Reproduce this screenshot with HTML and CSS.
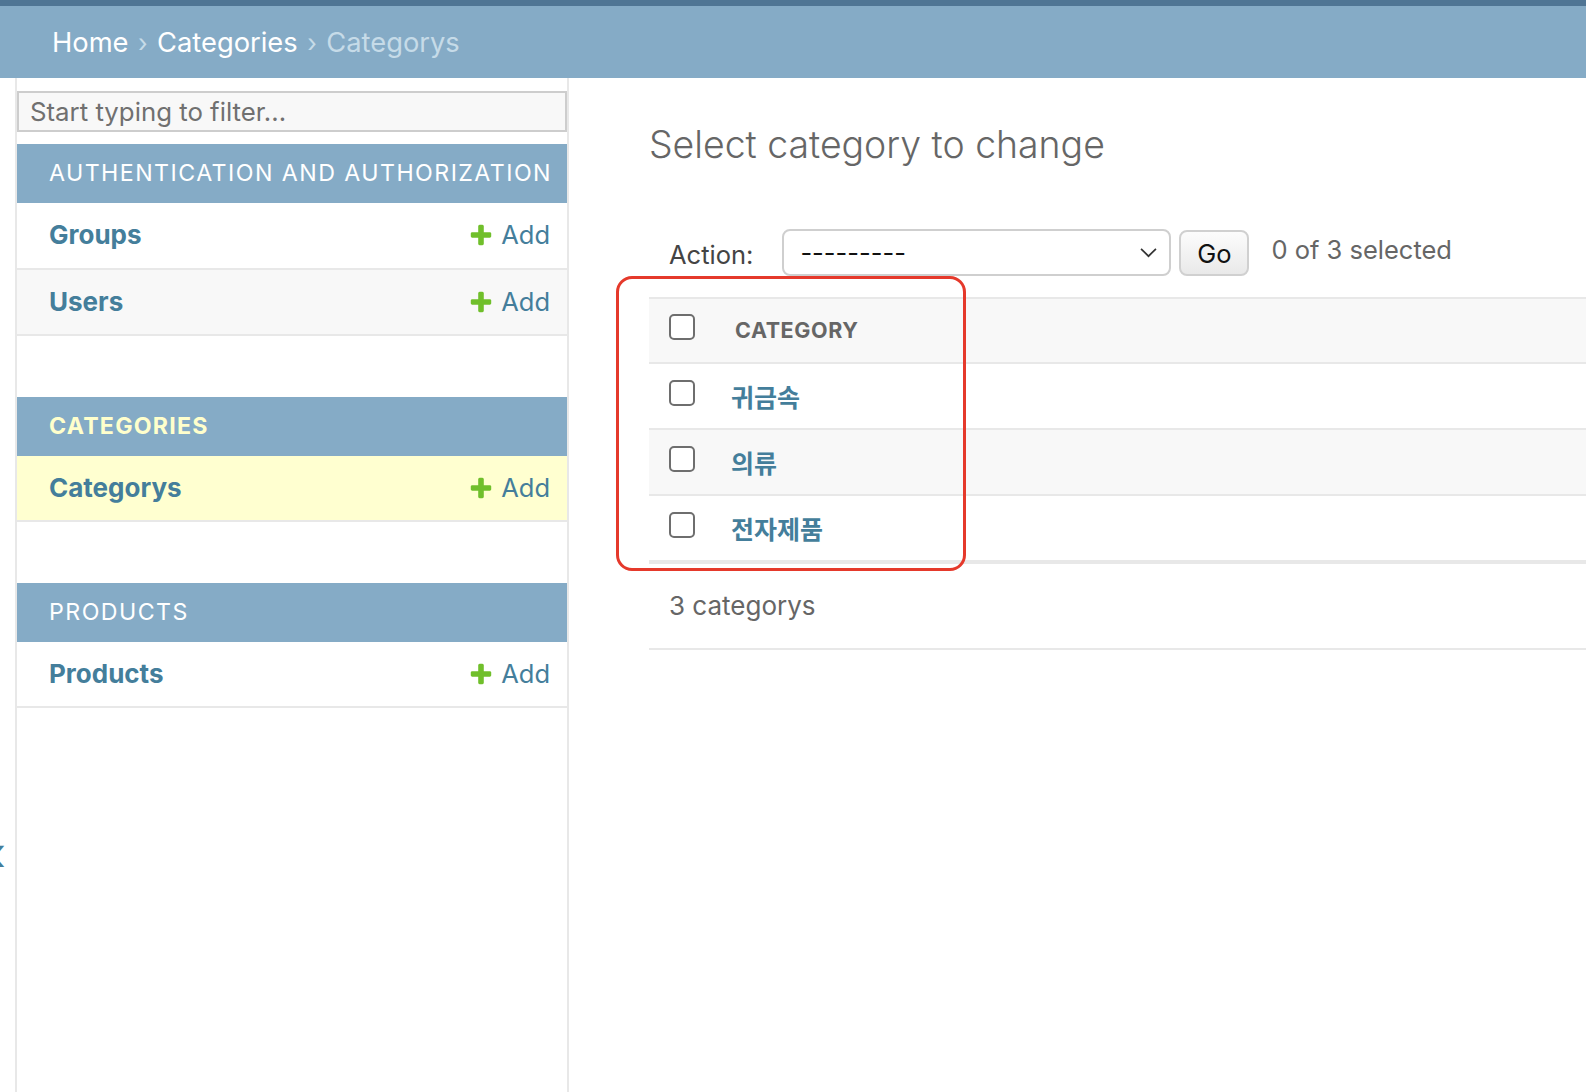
FILE: index.html
```html
<!DOCTYPE html>
<html lang="en">
<head>
<meta charset="utf-8">
<title>Select category to change</title>
<link rel="stylesheet" href="styles.css">
</head>
<body>
<div class="header-strip"></div>
<nav class="breadcrumbs">
  <a class="crumb" href="#">Home</a><span class="sep">›</span><a class="crumb" href="#">Categories</a><span class="sep">›</span><span class="crumb current">Categorys</span>
</nav>
<div class="main">
  <div class="toggle"><span class="toggle-glyph">‹</span></div>
  <aside class="sidebar">
    <div class="nav-filter">Start typing to filter...</div>

    <div class="module">
      <div class="caption">Authentication and Authorization</div>
      <div class="row"><a class="model" href="#">Groups</a><a class="addlink" href="#"><svg class="plus" viewBox="0 0 1792 1792"><path d="M1600 796v192q0 40-28 68t-68 28h-416v416q0 40-28 68t-68 28h-192q-40 0-68-28t-28-68v-416h-416q-40 0-68-28t-28-68v-192q0-40 28-68t68-28h416v-416q0-40 28-68t68-28h192q40 0 68 28t28 68v416h416q40 0 68 28t28 68z"/></svg>Add</a></div>
      <div class="row alt"><a class="model" href="#">Users</a><a class="addlink" href="#"><svg class="plus" viewBox="0 0 1792 1792"><path d="M1600 796v192q0 40-28 68t-68 28h-416v416q0 40-28 68t-68 28h-192q-40 0-68-28t-28-68v-416h-416q-40 0-68-28t-28-68v-192q0-40 28-68t68-28h416v-416q0-40 28-68t68-28h192q40 0 68 28t28 68v416h416q40 0 68 28t28 68z"/></svg>Add</a></div>
    </div>

    <div class="module">
      <div class="caption current-app">Categories</div>
      <div class="row current-model"><a class="model" href="#">Categorys</a><a class="addlink" href="#"><svg class="plus" viewBox="0 0 1792 1792"><path d="M1600 796v192q0 40-28 68t-68 28h-416v416q0 40-28 68t-68 28h-192q-40 0-68-28t-28-68v-416h-416q-40 0-68-28t-28-68v-192q0-40 28-68t68-28h416v-416q0-40 28-68t68-28h192q40 0 68 28t28 68v416h416q40 0 68 28t28 68z"/></svg>Add</a></div>
    </div>

    <div class="module">
      <div class="caption">Products</div>
      <div class="row"><a class="model" href="#">Products</a><a class="addlink" href="#"><svg class="plus" viewBox="0 0 1792 1792"><path d="M1600 796v192q0 40-28 68t-68 28h-416v416q0 40-28 68t-68 28h-192q-40 0-68-28t-28-68v-416h-416q-40 0-68-28t-28-68v-192q0-40 28-68t68-28h416v-416q0-40 28-68t68-28h192q40 0 68 28t28 68v416h416q40 0 68 28t28 68z"/></svg>Add</a></div>
    </div>
  </aside>

  <section class="content">
    <h1 class="title">Select category to change</h1>
    <div class="actions">
      <span class="action-label">Action:</span>
      <div class="select"><span class="select-value">---------</span><svg class="chevron" viewBox="0 0 16 10"><path d="M1 1.5 L8 8.5 L15 1.5" /></svg></div>
      <div class="go">Go</div>
      <span class="counter">0 of 3 selected</span>
    </div>
    <div class="results">
      <div class="tr thead">
        <div class="cb-cell"><span class="checkbox"></span></div>
        <div class="th-label">Category</div>
      </div>
      <div class="tr">
        <div class="cb-cell"><span class="checkbox"></span></div>
        <a class="item" href="#">귀금속</a>
      </div>
      <div class="tr alt">
        <div class="cb-cell"><span class="checkbox"></span></div>
        <a class="item" href="#">의류</a>
      </div>
      <div class="tr">
        <div class="cb-cell"><span class="checkbox"></span></div>
        <a class="item" href="#">전자제품</a>
      </div>
    </div>
    <p class="paginator">3 categorys</p>
    <div class="annotation"></div>
  </section>
</div>
</body>
</html>
```

FILE: styles.css
```css
* { box-sizing: border-box; }

html, body {
  margin: 0;
  padding: 0;
  background: #fff;
  overflow: hidden;
}

body {
  font-family: Inter, "Noto Sans CJK KR", "Noto Sans", sans-serif;
  color: #333;
  height: 1092px;
  width: 1586px;
}

a { text-decoration: none; }

.header-strip {
  height: 6px;
  background: #4f7594;
}

.breadcrumbs {
  height: 72px;
  background: #85abc6;
  display: flex;
  align-items: center;
  padding-left: 52px;
  padding-top: 2px;
  font-size: 27.3px;
  line-height: 1;
  white-space: nowrap;
}

.crumb { color: #fff; }
.crumb.current { color: #c6dbe8; }
.sep {
  color: #c6dbe8;
  margin: 0 9.5px;
  font-size: 25px;
}

.main {
  display: flex;
  height: 1014px;
}

.toggle {
  flex: 0 0 17px;
  width: 17px;
  border-right: 2px solid #e8e8e8;
  overflow: hidden;
  padding-top: 752px;
}

.toggle-glyph {
  display: block;
  color: #447e9b;
  font-size: 46px;
  font-weight: 700;
  line-height: 46px;
  margin-left: -14px;
}

.sidebar {
  flex: 0 0 552px;
  width: 552px;
  border-right: 2px solid #e8e8e8;
}

.nav-filter {
  margin: 13px 0 12px 0;
  height: 41px;
  border: 2px solid #cdcdcd;
  background: #f8f8f8;
  color: #707070;
  font-size: 25.8px;
  line-height: 38px;
  padding-left: 11px;
  white-space: nowrap;
}

.module {
  margin-bottom: 60.5px;
}

.caption {
  background: #85abc6;
  color: #fff;
  font-size: 23.2px;
  letter-spacing: 1.45px;
  text-transform: uppercase;
  padding: 16px 0 16px 32px;
  line-height: 27px;
  font-weight: 400;
  white-space: nowrap;
}

.caption.current-app {
  color: #ffffcc;
  font-weight: 700;
  letter-spacing: 1.2px;
}

.row {
  display: flex;
  justify-content: space-between;
  align-items: center;
  padding: 16px 17px 16px 32px;
  line-height: 32.5px;
  font-size: 26px;
  border-bottom: 2px solid #e8e8e8;
  background: #fff;
}

.row.alt { background: #f8f8f8; }
.row.current-model { background: #ffffd0; }

.model {
  color: #447e9b;
  font-weight: 700;
}

.addlink {
  color: #447e9b;
  display: flex;
  align-items: center;
  font-size: 25.5px;
}

.plus {
  width: 26px;
  height: 26px;
  fill: #70bf2b;
  margin-right: 7px;
}

.content {
  flex: 1;
  position: relative;
  padding: 43px 0 0 80px;
}

.title {
  margin: 0 0 40.6px 0;
  font-size: 37.4px;
  font-weight: 300;
  line-height: 48px;
  color: #666;
  white-space: nowrap;
}

.actions {
  display: flex;
  align-items: center;
  padding: 20px 20px 21px 20px;
  height: 87px;
  font-size: 25.5px;
  white-space: nowrap;
}

.action-label {
  color: #444;
  margin-top: 4px;
}

.select {
  margin-left: 29px;
  width: 389px;
  height: 47px;
  border: 2px solid #cfcfcf;
  border-radius: 8px;
  background: #fff;
  display: flex;
  align-items: center;
  justify-content: space-between;
  padding: 0 12px 0 16px;
  color: #111;
}

.chevron {
  width: 17px;
  height: 11px;
  fill: none;
  stroke: #333;
  stroke-width: 1.6;
}

.go {
  margin-left: 8px;
  width: 70px;
  height: 46px;
  border: 2px solid #d0d0d0;
  border-radius: 8px;
  background: linear-gradient(#fcfcfc, #e9e9e9);
  color: #111;
  display: flex;
  align-items: center;
  justify-content: center;
  padding-top: 2px;
}

.counter {
  margin-left: 22px;
  color: #666;
  margin-bottom: 6px;
}

.results {
  width: 100%;
  border-top: 2px solid #e8e8e8;
}

.tr {
  display: flex;
  align-items: center;
  height: 66px;
  border-bottom: 2px solid #e8e8e8;
  background: #fff;
}

.tr.thead {
  height: 65px;
  background: #f8f8f8;
}

.tr.alt { background: #f8f8f8; }

.tr:last-child { border-bottom-width: 4px; height: 68px; }

.cb-cell {
  width: 82px;
  padding-left: 20px;
  padding-bottom: 6px;
  display: flex;
  align-items: center;
}

.checkbox {
  display: block;
  width: 26px;
  height: 26px;
  border: 2px solid #6e6e6e;
  border-radius: 5px;
  background: #fff;
}

.th-label {
  color: #666;
  font-size: 21.5px;
  font-weight: 700;
  text-transform: uppercase;
  letter-spacing: 0.6px;
  margin-left: 4px;
}

.item {
  color: #447e9b;
  font-size: 25px;
  font-weight: 700;
}

.paginator {
  margin: 0;
  padding: 20px 20px;
  line-height: 44px;
  font-size: 26px;
  color: #666;
  border-bottom: 2px solid #e8e8e8;
}

.annotation {
  position: absolute;
  left: 47px;
  top: 198px;
  width: 350px;
  height: 295px;
  border: 3.5px solid #e5392b;
  border-radius: 16px;
  pointer-events: none;
}
```
